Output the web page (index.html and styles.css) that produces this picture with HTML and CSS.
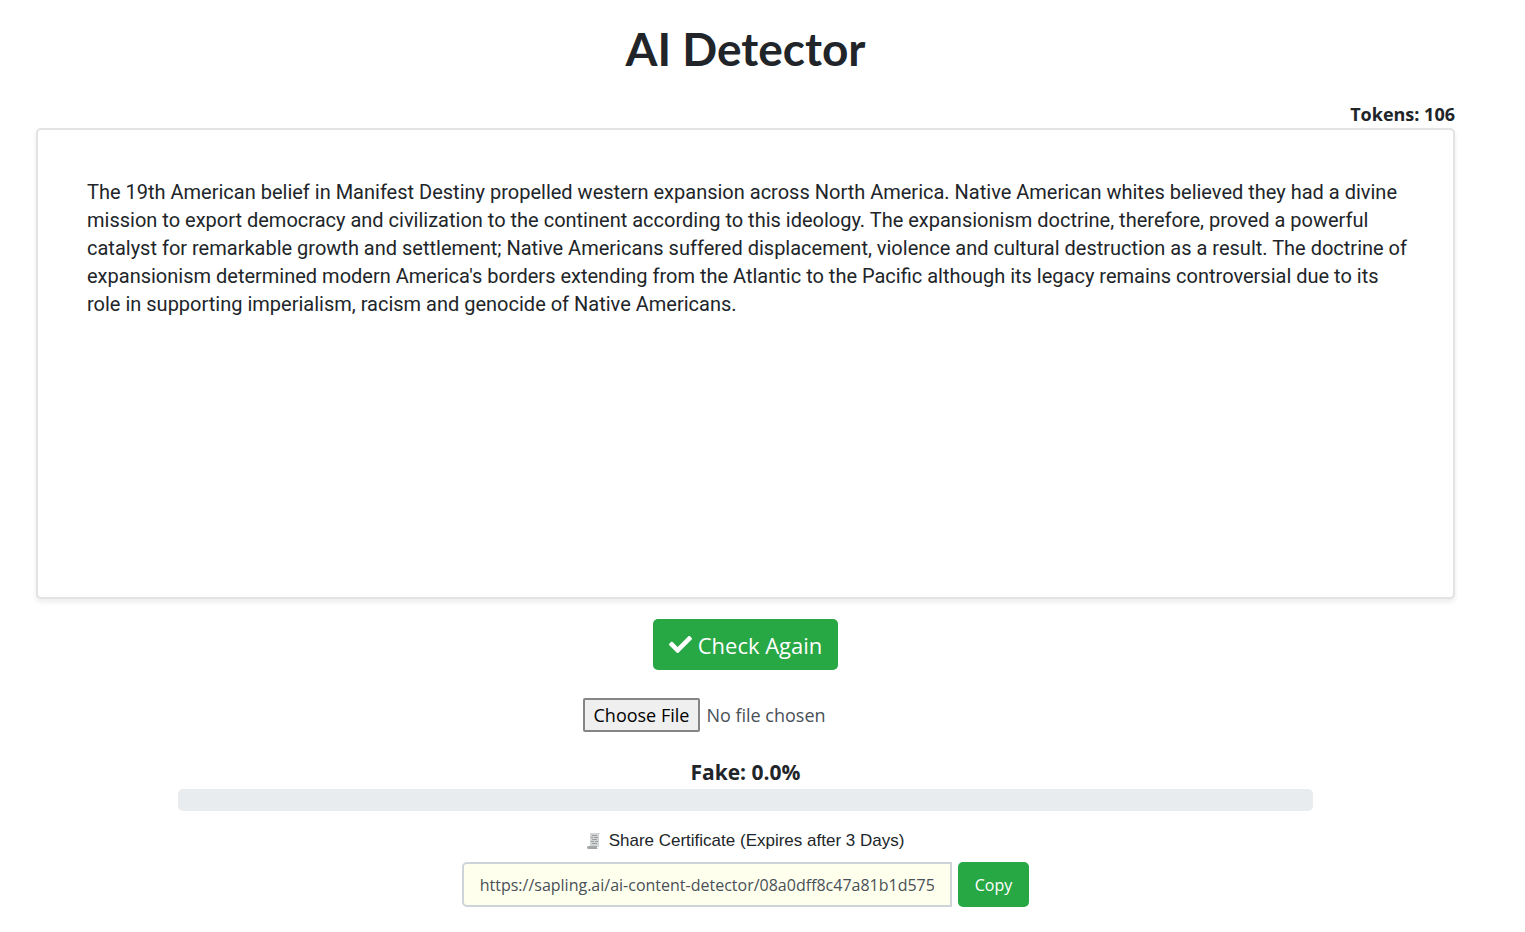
FILE: index.html
```html
<!DOCTYPE html>
<html lang="en">
<head>
  <meta charset="UTF-8">
  <meta name="viewport" content="width=device-width, initial-scale=1">
  <title>AI Detector</title>
  <link rel="stylesheet" href="styles.css">
</head>
<body>

<main class="detector">
  <h1>AI Detector</h1>

  <label class="tokens" for="content">Tokens: 106</label>
  <textarea id="content" class="content" spellcheck="false">The 19th American belief in Manifest Destiny propelled western expansion across North America. Native American whites believed they had a divine mission to export democracy and civilization to the continent according to this ideology. The expansionism doctrine, therefore, proved a powerful catalyst for remarkable growth and settlement; Native Americans suffered displacement, violence and cultural destruction as a result. The doctrine of expansionism determined modern America's borders extending from the Atlantic to the Pacific although its legacy remains controversial due to its role in supporting imperialism, racism and genocide of Native Americans.</textarea>

  <button type="button" class="btn btn-check">
    <svg class="check-icon" viewBox="0 0 512 512" aria-hidden="true"><path fill="currentColor" d="M174 439 7 273c-10-10-10-26 0-36l37-37c10-10 26-10 36 0l112 112L432 72c10-10 26-10 36 0l37 37c10 10 10 26 0 36L210 439c-10 10-26 10-36 0z"/></svg>
    Check Again
  </button>

  <input type="file" class="file" aria-label="Upload a file">

  <div class="score">Fake: 0.0%</div>
  <div class="progress" role="progressbar" aria-label="Fake score" aria-valuenow="0" aria-valuemin="0" aria-valuemax="100"></div>

  <label class="share-label" for="share-url">
    <svg class="cert-icon" viewBox="0 0 14 16" aria-hidden="true">
      <path fill="#d3d5d5" d="M3 0h10v1h-1v13H3z"/>
      <path stroke="#9a9fa1" d="M5 2.500h5M4 4.500h2m1 0h4M5 6.500h5M4 8.500h3m1 0h3M5 10.500h5"/>
      <path fill="#a3a6a7" d="M1 13h9v2l1 1H2q-2 0-2-1.500T1 13z"/>
    </svg>
    Share Certificate (Expires after 3 Days)
  </label>
  <div class="share">
    <input type="text" id="share-url" class="share-url" value="https://sapling.ai/ai-content-detector/08a0dff8c47a81b1d5753e" readonly>
    <button type="button" class="btn btn-copy">Copy</button>
  </div>
</main>

</body>
</html>
```

FILE: styles.css
```css
* {
  box-sizing: border-box;
}

body {
  margin: 0;
  background-color: #fff;
  color: #212529;
  font-family: "Open Sans", "Noto Sans", sans-serif;
  font-size: 18px;
}

.detector {
  display: flex;
  flex-direction: column;
  align-items: center;
  padding: 20px 70px 24px 36px;
}

h1 {
  margin: 0;
  font-family: Lato, sans-serif;
  font-size: 46px;
  font-weight: 700;
  line-height: 58px;
}

.tokens {
  align-self: flex-end;
  margin-top: 24px;
  margin-bottom: 2px;
  font-weight: 700;
  line-height: 24px;
}

.content {
  display: block;
  width: 100%;
  height: 471px;
  padding: 48px 44px 48px 49px;
  border: 2px solid #e1e3e4;
  border-radius: 5px;
  outline: none;
  resize: none;
  background-color: #fff;
  box-shadow: 0 3px 5px rgba(0, 0, 0, 0.08);
  color: #212529;
  font-family: Roboto, sans-serif;
  font-size: 20px;
  line-height: 28px;
}

.btn {
  border: none;
  border-radius: 5px;
  background-color: #28a745;
  color: #fff;
  font-family: inherit;
  cursor: pointer;
}

.btn:hover {
  background-color: #218838;
}

.btn-check {
  display: flex;
  align-items: center;
  gap: 6px;
  height: 51px;
  margin-top: 20px;
  padding: 0 16px;
  font-size: 22px;
}

.check-icon {
  width: 23px;
  height: 23px;
}

.file {
  width: 326px;
  margin-top: 28px;
  color: #495057;
  font-family: inherit;
  font-size: 18px;
}

.file::file-selector-button {
  height: 34px;
  margin-right: 6px;
  padding: 0 9px;
  border: 2px solid #858585;
  border-radius: 2px;
  background-color: #efefef;
  color: #000;
  font-family: inherit;
  font-size: 18px;
}

.score {
  margin-top: 25px;
  font-size: 21px;
  font-weight: 700;
  line-height: 30px;
}

.progress {
  width: 80%;
  height: 22px;
  margin-top: 2px;
  border-radius: 5px;
  background-color: #e9ecef;
}

.share-label {
  display: flex;
  align-items: center;
  gap: 8px;
  margin-top: 18px;
  font-family: "Liberation Sans", Arial, sans-serif;
  font-size: 17px;
  line-height: 24px;
}

.cert-icon {
  width: 14px;
  height: 16px;
  fill: none;
}

.share {
  display: flex;
  gap: 6px;
  width: 40%;
  margin-top: 9px;
}

.share-url {
  flex: 1;
  min-width: 0;
  height: 45px;
  padding: 0 16px;
  border: 2px solid #ced4da;
  border-radius: 5px 0 0 5px;
  background-color: #ffffee;
  color: #495057;
  font-family: inherit;
  font-size: 16px;
}

.btn-copy {
  padding: 0 17px;
  font-size: 16px;
}
```
